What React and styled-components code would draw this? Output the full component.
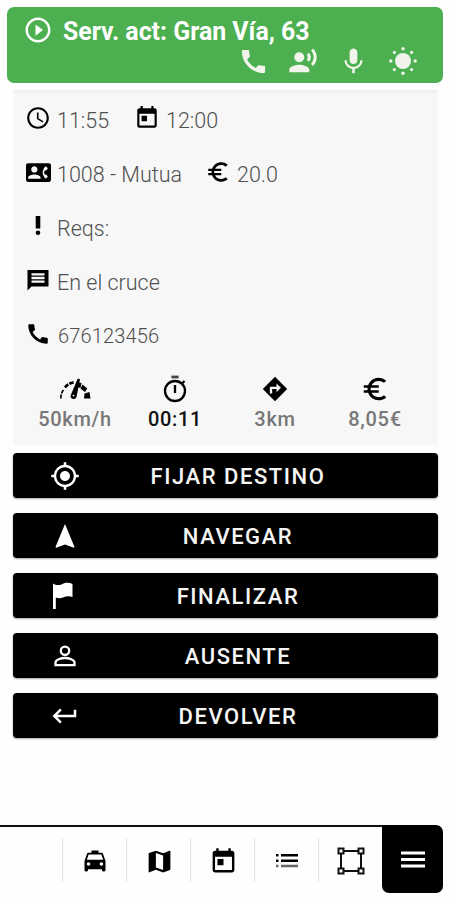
import React from 'react';
import styled, { createGlobalStyle } from 'styled-components';
import {
  MdPlayCircleOutline,
  MdCall,
  MdRecordVoiceOver,
  MdMic,
  MdAccessTime,
  MdToday,
  MdContactPhone,
  MdEuroSymbol,
  MdMyLocation,
  MdKeyboardReturn,
  MdLocalTaxi,
  MdMap,
} from 'react-icons/md';

const SunIcon = () => (
  <svg width="30" height="30" viewBox="0 0 30 30" fill="currentColor">
    <circle cx="15" cy="15" r="8" />
    <circle cx="15" cy="2.8" r="1.7" />
    <circle cx="15" cy="27.2" r="1.7" />
    <circle cx="2.8" cy="15" r="1.7" />
    <circle cx="27.2" cy="15" r="1.7" />
    <circle cx="6.4" cy="6.4" r="1.6" />
    <circle cx="23.6" cy="6.4" r="1.6" />
    <circle cx="6.4" cy="23.6" r="1.6" />
    <circle cx="23.6" cy="23.6" r="1.6" />
  </svg>
);

const AlertIcon = () => (
  <svg width="8" height="20" viewBox="0 0 8 20">
    <path d="M1.7 0H6.3V12.5H1.7Z" />
    <circle cx="4" cy="16.8" r="2.3" />
  </svg>
);

const MessageIcon = () => (
  <svg width="22" height="22" viewBox="0 0 22 22">
    <path d="M0.5 1H21.5V17.5H4.5L0.5 21.5Z" />
    <path d="M4.500 5.300H17.500M4.500 9H17.500M4.500 12.700H17.500" stroke="#f7f7f7" strokeWidth="2.300" />
  </svg>
);

const SpeedIcon = () => (
  <svg width="32" height="24" viewBox="0 0 32 24">
    <path d="M1.800 21.500A14 14 0 0 1 4.800 12.500" fill="none" stroke="#000" strokeWidth="1.700" strokeDasharray="4 1" />
    <path d="M6 10.500A14 14 0 0 1 15 5.200" fill="none" stroke="#000" strokeWidth="2.800" strokeDasharray="4.500 1.200" />
    <path d="M17 5L22.500 6L21.500 11L17 9.500Z" />
    <path d="M23.500 7.500L28.300 11.500L26 15L21.500 11.800Z" />
    <path d="M25.500 16.500L30.500 15L31.500 21.500H25Z" />
    <path d="M18.800 1.500L21 2.200L17.500 20A3 3 0 0 1 11.800 18Z" />
    <circle cx="14.500" cy="18.600" r="0.900" fill="#f7f7f7" />
  </svg>
);

const TimerIcon = () => (
  <svg width="26" height="28" viewBox="0 0 26 28" fill="none" stroke="#000" strokeWidth="2.300">
    <circle cx="13" cy="16" r="10" />
    <path d="M9.400 2H16.600" stroke="#444" strokeWidth="2.800" />
    <path d="M13 10V18M20 8.500L22.500 6" />
  </svg>
);

const TurnIcon = () => (
  <svg width="26" height="26" viewBox="0 0 26 26">
    <path d="M13 0.800L25.200 13L13 25.200L0.800 13Z" />
    <path d="M9 17.500V11.800H15.500" fill="none" stroke="#f7f7f7" strokeWidth="2.300" />
    <path d="M14.500 7.600L19 11.800L14.500 16Z" fill="#f7f7f7" />
  </svg>
);

const ArrowIcon = () => (
  <svg width="22" height="26" viewBox="0 0 22 26" fill="currentColor">
    <path d="M11 1L20.500 24L19.800 24.800L11 21.500L2.200 24.800L1.500 24Z" />
  </svg>
);

const FlagIcon = () => (
  <svg width="22" height="28" viewBox="0 0 22 28" fill="currentColor">
    <path d="M1 1.500C4 3.500 7 3.500 10 2.200C14 .4 17 .5 20.500 2V15C17 13.800 14 14.300 11 15.500C8.500 16.500 6 16.500 3.800 15.500V27H1Z" />
  </svg>
);

const PersonIcon = () => (
  <svg width="22" height="22" viewBox="0 0 22 22" fill="none" stroke="currentColor" strokeWidth="2.300">
    <circle cx="11" cy="5.800" r="4.200" />
    <path d="M1.500 20.200V17.500C1.500 14.800 7 13 11 13S20.500 14.800 20.500 17.500V20.200Z" />
  </svg>
);

const ListIcon = () => (
  <svg width="24" height="16" viewBox="0 0 24 16" fill="none" strokeWidth="2.400">
    <path d="M1 2.300H3.500M6 2.300H23" stroke="#000" />
    <path d="M1 7.800H3.500M6 7.800H23" stroke="#000" />
    <path d="M1 13H3.500M6 13H23" stroke="#666" />
  </svg>
);

const ZoneIcon = () => (
  <svg width="28" height="28" viewBox="0 0 28 28" fill="none" stroke="#111" strokeWidth="2">
    <path d="M7 4H21M7 24H21M4 7V21M24 7V21" />
    <rect x="1.500" y="1.500" width="5" height="5" />
    <rect x="21.500" y="1.500" width="5" height="5" />
    <rect x="1.500" y="21.500" width="5" height="5" />
    <rect x="21.500" y="21.500" width="5" height="5" />
  </svg>
);

const BarsIcon = () => (
  <svg width="24" height="17" viewBox="0 0 24 17" stroke="currentColor" strokeWidth="3">
    <path d="M0 2H24M0 8.500H24M0 15H24" />
  </svg>
);

const actions = [
  { label: 'FIJAR DESTINO', icon: <MdMyLocation size={30} /> },
  { label: 'NAVEGAR', icon: <ArrowIcon /> },
  { label: 'FINALIZAR', icon: <FlagIcon />, shift: 4 },
  { label: 'AUSENTE', icon: <PersonIcon /> },
  { label: 'DEVOLVER', icon: <MdKeyboardReturn size={30} /> },
];

const App = () => (
  <Screen>
    <GlobalStyle />

    <Header>
      <TitleRow>
        <MdPlayCircleOutline size={30} />
        <Title>Serv. act: Gran Vía, 63</Title>
      </TitleRow>
      <HeaderIcons>
        <HeaderIcon><MdCall size={31} /></HeaderIcon>
        <HeaderIcon><MdRecordVoiceOver size={30} /></HeaderIcon>
        <HeaderIcon><MdMic size={31} /></HeaderIcon>
        <HeaderIcon><SunIcon /></HeaderIcon>
      </HeaderIcons>
    </Header>

    <Details>
      <InfoRow>
        <InfoIcon><MdAccessTime size={26} /></InfoIcon>
        <InfoText $width={77}>11:55</InfoText>
        <InfoIcon><MdToday size={26} /></InfoIcon>
        <InfoText>12:00</InfoText>
      </InfoRow>
      <InfoRow>
        <InfoIcon><MdContactPhone size={25} /></InfoIcon>
        <InfoText $width={148}>1008 - Mutua</InfoText>
        <InfoIcon><MdEuroSymbol size={26} /></InfoIcon>
        <InfoText>20.0</InfoText>
      </InfoRow>
      <InfoRow>
        <InfoIcon><AlertIcon /></InfoIcon>
        <InfoText>Reqs:</InfoText>
      </InfoRow>
      <InfoRow>
        <InfoIcon><MessageIcon /></InfoIcon>
        <InfoText>En el cruce</InfoText>
      </InfoRow>
      <InfoRow>
        <InfoIcon><MdCall size={26} /></InfoIcon>
        <InfoText $phone>676123456</InfoText>
      </InfoRow>

      <Stats>
        <Stat>
          <StatIcon><SpeedIcon /></StatIcon>
          <StatLabel>50km/h</StatLabel>
        </Stat>
        <Stat>
          <StatIcon><TimerIcon /></StatIcon>
          <StatLabel $dark>00:11</StatLabel>
        </Stat>
        <Stat>
          <StatIcon><TurnIcon /></StatIcon>
          <StatLabel>3km</StatLabel>
        </Stat>
        <Stat>
          <StatIcon><MdEuroSymbol size={30} /></StatIcon>
          <StatLabel>8,05€</StatLabel>
        </Stat>
      </Stats>
    </Details>

    <Actions>
      {actions.map(({ label, icon, shift }) => (
        <ActionButton key={label}>
          <ActionIcon $shift={shift}>{icon}</ActionIcon>
          <ActionLabel>{label}</ActionLabel>
        </ActionButton>
      ))}
    </Actions>

    <BottomBar>
      <Tabs>
        <Tab><MdLocalTaxi size={28} /></Tab>
        <Tab><MdMap size={29} /></Tab>
        <Tab><MdToday size={29} /></Tab>
        <Tab><ListIcon /></Tab>
        <Tab><ZoneIcon /></Tab>
      </Tabs>
      <MenuButton><BarsIcon /></MenuButton>
    </BottomBar>
  </Screen>
);

//styled components

const GlobalStyle = createGlobalStyle`
  body {
    margin: 0;
    background: #fefefe;
    font-family: Roboto, sans-serif;
  }
  svg {
    display: block;
    flex-shrink: 0;
  }
`;

const Screen = styled.div`
  display: flex;
  flex-direction: column;
  box-sizing: border-box;
  width: 450px;
  height: 900px;
  padding: 7px 7px 7px 0;
  overflow: hidden;
`;

const Header = styled.div`
  box-sizing: border-box;
  height: 76px;
  margin-left: 7px;
  padding: 8px 15px 0 16px;
  border-radius: 7px;
  background: #4caf50;
  color: #fff;
`;

const TitleRow = styled.div`
  display: flex;
  align-items: center;
  gap: 10px;
  height: 30px;
`;

const Title = styled.div`
  padding-top: 2px;
  font-size: 24.9px;
  font-weight: 700;
  line-height: 31px;
  white-space: nowrap;
`;

const HeaderIcons = styled.div`
  display: flex;
  align-items: center;
  justify-content: flex-end;
  height: 32px;
  color: #f0f4ea;
`;

const HeaderIcon = styled.div`
  display: flex;
  justify-content: center;
  width: 50px;
`;

const Details = styled.div`
  box-sizing: border-box;
  height: 355px;
  margin: 7px 5px 0 13px;
  border-top: 3px solid #f2f2f2;
  background: #f7f7f7;
`;

const InfoRow = styled.div`
  display: flex;
  align-items: center;
  height: 54px;
  padding-left: 12px;
`;

const InfoIcon = styled.div`
  display: flex;
  justify-content: center;
  width: 26px;
  margin: 0 6px 4px 0;
  color: #000;
`;

const InfoText = styled.div`
  width: ${({ $width }) => ($width ? `${$width}px` : 'auto')};
  padding-left: ${({ $phone }) => ($phone ? '1px' : '0')};
  font-size: ${({ $phone }) => ($phone ? '20px' : '21.5px')};
  font-weight: 300;
  letter-spacing: ${({ $phone }) => ($phone ? '0.15px' : '0')};
  color: #4f4f4f;
  white-space: nowrap;
`;

const Stats = styled.div`
  display: grid;
  grid-template-columns: repeat(4, 100px);
  padding: 11px 0 0 12px;
`;

const Stat = styled.div`
  display: flex;
  flex-direction: column;
  align-items: center;
`;

const StatIcon = styled.div`
  display: flex;
  align-items: center;
  height: 30px;
`;

const StatLabel = styled.div`
  margin-top: 2px;
  font-size: 20px;
  font-weight: 500;
  letter-spacing: 0.7px;
  line-height: 26px;
  color: ${({ $dark }) => ($dark ? '#111' : '#777')};
`;

const Actions = styled.div`
  display: flex;
  flex-direction: column;
  gap: 15px;
  margin: 8px 5px 0 13px;
`;

const ActionButton = styled.button`
  display: grid;
  grid-template-columns: 104px 1fr 80px;
  align-items: center;
  height: 45px;
  padding: 0;
  border: 0;
  border-radius: 4px;
  background: #000;
  box-shadow: 0 1px 2px rgba(0, 0, 0, 0.35);
  color: #fff;
  font-family: inherit;
`;

const ActionIcon = styled.div`
  display: flex;
  justify-content: center;
  padding-right: ${({ $shift = 0 }) => $shift}px;
`;

const ActionLabel = styled.div`
  padding: 2px 0 0 1px;
  font-size: 22px;
  font-weight: 500;
  letter-spacing: 1.55px;
  color: #f5f5f5;
  text-align: center;
  white-space: nowrap;
`;

const BottomBar = styled.div`
  display: flex;
  height: 68px;
  margin-top: auto;
`;

const Tabs = styled.div`
  display: flex;
  flex: 1;
  align-items: center;
  justify-content: flex-end;
  border-top: 2px solid #111;
`;

const Tab = styled.div`
  display: flex;
  align-items: center;
  justify-content: center;
  box-sizing: border-box;
  width: 64px;
  height: 44px;
  padding: 2px 0 0 1px;
  border-left: 1px solid #e2e2e2;
`;

const MenuButton = styled.div`
  display: flex;
  align-items: center;
  justify-content: center;
  width: 61px;
  border-radius: 0 7px 7px 7px;
  background: #000;
  color: #fff;
`;

export default App;
